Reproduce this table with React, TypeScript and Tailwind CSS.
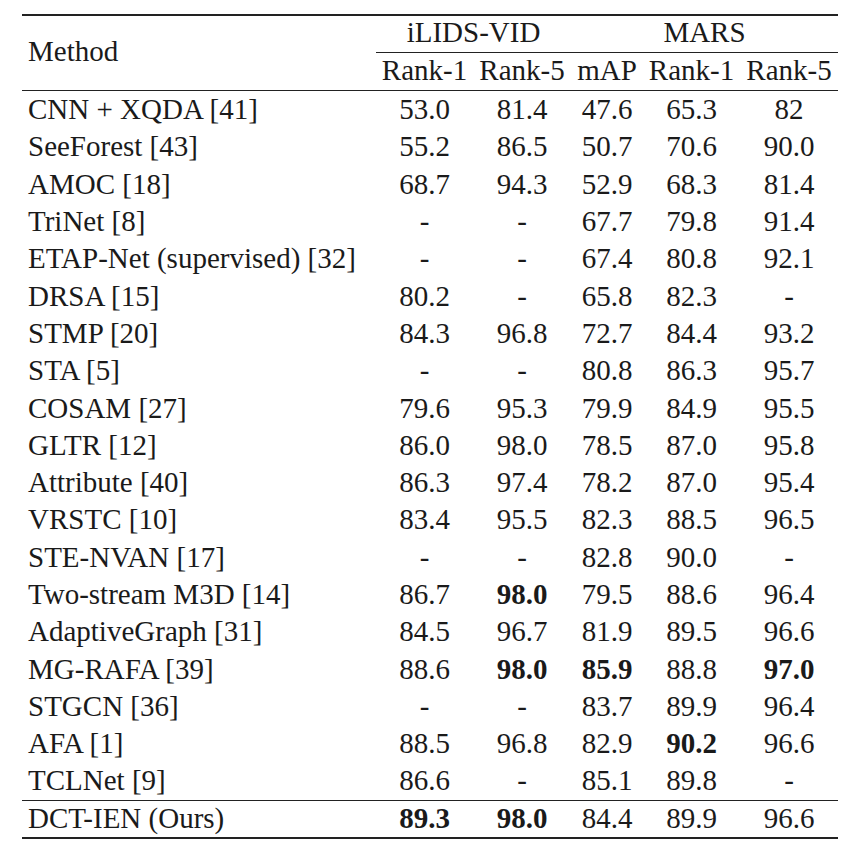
import React from 'react';

type Cell = string | { v: string; b: true };

interface Row {
  method: string;
  cells: Cell[];
}

const rows: Row[] = [
  { method: 'CNN + XQDA [41]', cells: ['53.0', '81.4', '47.6', '65.3', '82'] },
  { method: 'SeeForest [43]', cells: ['55.2', '86.5', '50.7', '70.6', '90.0'] },
  { method: 'AMOC [18]', cells: ['68.7', '94.3', '52.9', '68.3', '81.4'] },
  { method: 'TriNet [8]', cells: ['-', '-', '67.7', '79.8', '91.4'] },
  { method: 'ETAP-Net (supervised) [32]', cells: ['-', '-', '67.4', '80.8', '92.1'] },
  { method: 'DRSA [15]', cells: ['80.2', '-', '65.8', '82.3', '-'] },
  { method: 'STMP [20]', cells: ['84.3', '96.8', '72.7', '84.4', '93.2'] },
  { method: 'STA [5]', cells: ['-', '-', '80.8', '86.3', '95.7'] },
  { method: 'COSAM [27]', cells: ['79.6', '95.3', '79.9', '84.9', '95.5'] },
  { method: 'GLTR [12]', cells: ['86.0', '98.0', '78.5', '87.0', '95.8'] },
  { method: 'Attribute [40]', cells: ['86.3', '97.4', '78.2', '87.0', '95.4'] },
  { method: 'VRSTC [10]', cells: ['83.4', '95.5', '82.3', '88.5', '96.5'] },
  { method: 'STE-NVAN [17]', cells: ['-', '-', '82.8', '90.0', '-'] },
  { method: 'Two-stream M3D [14]', cells: ['86.7', { v: '98.0', b: true }, '79.5', '88.6', '96.4'] },
  { method: 'AdaptiveGraph [31]', cells: ['84.5', '96.7', '81.9', '89.5', '96.6'] },
  { method: 'MG-RAFA [39]', cells: ['88.6', { v: '98.0', b: true }, { v: '85.9', b: true }, '88.8', { v: '97.0', b: true }] },
  { method: 'STGCN [36]', cells: ['-', '-', '83.7', '89.9', '96.4'] },
  { method: 'AFA [1]', cells: ['88.5', '96.8', '82.9', { v: '90.2', b: true }, '96.6'] },
  { method: 'TCLNet [9]', cells: ['86.6', '-', '85.1', '89.8', '-'] },
];

const ours: Row = {
  method: 'DCT-IEN (Ours)',
  cells: [{ v: '89.3', b: true }, { v: '98.0', b: true }, '84.4', '89.9', '96.6'],
};

// column widths, same order as the cells
const colW = ['w-[97px]', 'w-[98px]', 'w-[72px]', 'w-[97px]', 'w-[98px]'];

const DataRow: React.FC<{ row: Row; top?: boolean }> = ({ row, top }) => (
  <div className={`flex items-center h-[37.3px] ${top ? 'border-t-[1.5px] border-[#222]' : ''}`}>
    <div className="w-[354px] pl-[6px] whitespace-nowrap">{row.method}</div>
    {row.cells.map((c, i) => {
      const bold = typeof c !== 'string';
      return (
        <div key={i} className={`${colW[i]} text-center ${bold ? 'font-bold' : ''}`}>
          {typeof c === 'string' ? c : c.v}
        </div>
      );
    })}
  </div>
);

export default function App() {
  return (
    <div
      className="w-[864px] h-[862px] bg-white text-[#1a1a1a] pt-[14px] pl-[22px] text-[29px] leading-none"
      style={{ fontFamily: '"Liberation Serif", "DejaVu Serif", serif' }}
    >
      <div className="w-[816px] border-t-2 border-b-2 border-[#222]">
        {/* Header */}
        <div className="flex border-b-[1.5px] border-[#222]">
          <div className="w-[354px] pl-[6px] flex items-center pb-[3px]">Method</div>
          <div className="flex flex-col">
            <div className="flex h-[37px] items-center pb-[3px] border-b-[1.5px] border-[#222]">
              <div className="w-[195px] text-center">iLIDS-VID</div>
              <div className="w-[267px] text-center">MARS</div>
            </div>
            <div className="flex h-[37px] items-center pb-[3px]">
              <div className={`${colW[0]} text-center`}>Rank-1</div>
              <div className={`${colW[1]} text-center`}>Rank-5</div>
              <div className={`${colW[2]} text-center`}>mAP</div>
              <div className={`${colW[3]} text-center`}>Rank-1</div>
              <div className={`${colW[4]} text-center`}>Rank-5</div>
            </div>
          </div>
        </div>

        {/* Body */}
        {rows.map((r) => (
          <DataRow key={r.method} row={r} />
        ))}
        <DataRow row={ours} top />
      </div>
    </div>
  );
}
